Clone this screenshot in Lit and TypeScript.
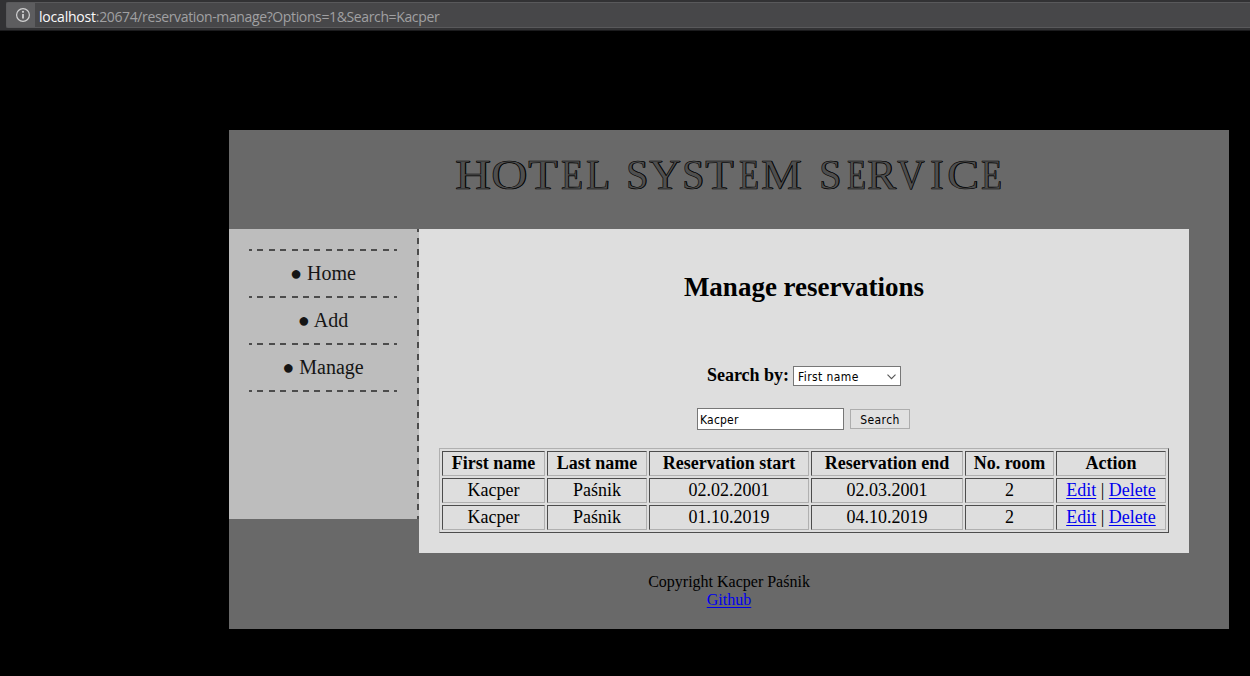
import { LitElement, html, css } from "lit";
import { customElement } from "lit/decorators.js";
import { styleMap } from "lit/directives/style-map.js";

const MENU = ["Home", "Add", "Manage"];
const COLUMNS = ["First name", "Last name", "Reservation start", "Reservation end", "No. room", "Action"];
const ROWS = [
  ["Kacper", "Paśnik", "02.02.2001", "02.03.2001", "2"],
  ["Kacper", "Paśnik", "01.10.2019", "04.10.2019", "2"],
];

const TITLE_SIZE = 43;
const TITLE_START = 226;
// Ink extents of each capital, in em.
const INK: Record<string, [number, number]> = {
  H: [0.019, 0.702], O: [0.034, 0.688], T: [0.017, 0.593], E: [0.012, 0.597], L: [0.012, 0.598], S: [0.042, 0.491],
  Y: [0.022, 0.703], M: [0.012, 0.863], R: [0.017, 0.659], V: [0.016, 0.697], I: [0.018, 0.315], C: [0.028, 0.633],
};
// Each letter with the left and right edge it spans in the banner.
const TITLE: [string, number, number][] = [
  ["H", 226, 260], ["O", 264, 297], ["T", 300, 328], ["E", 332, 353], ["L", 357, 380], [" ", 382, 394],
  ["S", 399, 417], ["Y", 421, 451], ["S", 455, 473], ["T", 477, 504], ["E", 510, 529], ["M", 533, 572], [" ", 574, 586],
  ["S", 592, 610], ["E", 618, 636], ["R", 639, 667], ["V", 669, 695], ["I", 702, 714], ["C", 719, 748], ["E", 753, 773],
];
const LETTERS = TITLE.map(([ch, left, right]) => {
  const ink = INK[ch];
  if (!ink) return { ch, x: left, scale: 1 };
  const scale = (right - left) / ((ink[1] - ink[0]) * TITLE_SIZE);
  return { ch, x: left - ink[0] * TITLE_SIZE * scale, scale };
});

@customElement("app-root")
export class AppRoot extends LitElement {
  static styles = css`
    :host { display: block; height: 676px; overflow: hidden; background: #000; color: #000;
      font: 18px/21px "Liberation Serif", "Times New Roman", serif; }
    * { box-sizing: border-box; }
    .browser { height: 31px; background: #323234; border-bottom: 1px solid #1b1b1d; padding: 2px 0 0 6px; }
    .address { display: flex; height: 26px; border: 1px solid #59595b; border-right: 0; border-radius: 2px 0 0 2px;
      background: #474749; color: #a0a0a2; font: 14px/26px "Open Sans", "Noto Sans", sans-serif; white-space: pre; }
    .info { width: 28px; height: 24px; background: #5d5d5f; display: flex; align-items: center; justify-content: center; padding-left: 4px; }
    .url { margin-left: 4px; padding-top: 1px; height: 24px; letter-spacing: -0.37px; }
    .host { color: #f9f9fa; letter-spacing: -0.2px; }
    .page { width: 1000px; height: 499px; margin: 99px 0 0 229px; background: #696969; }
    .title { display: flex; height: 99px; margin: 0; padding: 21px 0 0 226px; font-size: 43px; line-height: 48px; font-weight: normal;
      color: #4f4f4f; -webkit-text-stroke: 0.6px #000; text-shadow: 0.7px 0 0 #000; white-space: pre; }
    .letter { flex: none; transform-origin: 0 50%; }
    .body { display: flex; align-items: flex-start; }
    .side { width: 190px; height: 290px; padding: 20px 20px 0; background:
      repeating-linear-gradient(to bottom, #4c4c4c 0 3px, #bdbdbd 3px 8.6px, #4c4c4c 8.6px 11.6px) right top / 2px 100% no-repeat, #bdbdbd; }
    .item, .end { width: 148px; background: repeating-linear-gradient(to right, #4c4c4c 0 3px, transparent 3px 8.385px, #4c4c4c 8.385px 11.385px) left top / 100% 2px no-repeat; }
    .item { height: 47px; padding-top: 2px; font-size: 20px; line-height: 44px; text-align: center; color: #151515; }
    .end { height: 2px; }
    .content { width: 770px; height: 324px; padding: 43px 20px 20px; background: #dedede; text-align: center; }
    h2 { margin: 0; font-size: 27px; line-height: 31px; }
    .by { display: flex; justify-content: center; align-items: center; gap: 4px; margin-top: 63px; height: 20px; font-weight: bold; }
    .label { padding-bottom: 2px; }
    .control { font: 12px/18px "DejaVu Sans Condensed", "DejaVu Sans", sans-serif; font-stretch: condensed; text-align: left; letter-spacing: 0.4px; }
    .select { display: flex; justify-content: space-between; align-items: center; width: 108px; height: 20px; background: #fff; border: 1px solid #777; padding: 2px 4px 0; }
    .find { display: flex; justify-content: center; align-items: center; gap: 6px; margin-top: 22px; height: 22px; padding-right: 1px; }
    .input { width: 147px; height: 22px; border: 1px solid #777; background: #fff; padding: 1px 2px 0; outline: 0; color: #000; letter-spacing: 0.2px; }
    .button { width: 60px; height: 20px; border: 1px solid #adadad; background: #e1e1e1; padding: 1px 0 0; text-align: center; color: #000; }
    table { width: 730px; margin-top: 18px; table-layout: fixed; border: 1px solid; border-color: #b0b0b0 #4c4c4c #4c4c4c #b0b0b0; border-spacing: 2px; }
    th, td { height: 25px; padding: 1px; border: 1px solid; border-color: #4c4c4c #b0b0b0 #b0b0b0 #4c4c4c; }
    .w0 { width: 103px; } .w1 { width: 100px; } .w2 { width: 160px; } .w3 { width: 152px; } .w4 { width: 89px; } .w5 { width: 110px; }
    a { color: #00e; text-decoration: underline 1px; text-underline-offset: 2px; text-decoration-skip-ink: none; }
    .footer { padding-top: 20px; text-align: center; font-size: 16px; line-height: 18px; }
  `;

  renderLetter(index: number) {
    const { ch, x, scale } = LETTERS[index];
    const start = index ? x : TITLE_START;
    const next = LETTERS[index + 1]?.x ?? x + 30;
    return html`<span class="letter" style=${styleMap({ width: `${next - start}px`, transform: `scaleX(${scale})` })}>${ch}</span>`;
  }

  render() {
    return html`
      <div class="browser"><div class="address">
        <div class="info"><svg width="16" height="16" viewBox="0 0 16 16">
          <circle cx="8" cy="8" r="6.4" fill="none" stroke="#d0d0d1" stroke-width="1.2"/>
          <path d="M8 7v4.5" stroke="#d0d0d1" stroke-width="1.8"/><circle cx="8" cy="4.8" r="1.1" fill="#d0d0d1"/></svg></div>
        <div class="url"><span class="host">localhost</span>:20674/reservation-manage?Options=1&amp;Search=Kacper</div>
      </div></div>
      <main class="page">
        <h1 class="title">${LETTERS.map((_, i) => this.renderLetter(i))}</h1>
        <div class="body">
          <nav class="side">${MENU.map((m) => html`<div class="item">● ${m}</div>`)}<div class="end"></div></nav>
          <section class="content">
            <h2>Manage reservations</h2>
            <div class="by"><span class="label">Search by:</span>
              <div class="control select"><span>First name</span>
                <svg width="9" height="6" viewBox="0 0 9 6"><path d="M.5 .7L4.5 4.7L8.5 .7" fill="none" stroke="#555" stroke-width="1.1"/></svg></div></div>
            <div class="find"><input class="control input" .value=${"Kacper"} /><button class="control button">Search</button></div>
            <table>
              <thead><tr>${COLUMNS.map((c, i) => html`<th class="w${i}">${c}</th>`)}</tr></thead>
              <tbody>${ROWS.map((r) => html`<tr>${r.map((c) => html`<td>${c}</td>`)}<td><a href="#">Edit</a> | <a href="#">Delete</a></td></tr>`)}</tbody>
            </table>
          </section>
        </div>
        <footer class="footer">Copyright Kacper Paśnik<br /><a href="#">Github</a></footer>
      </main>`;
  }
}
